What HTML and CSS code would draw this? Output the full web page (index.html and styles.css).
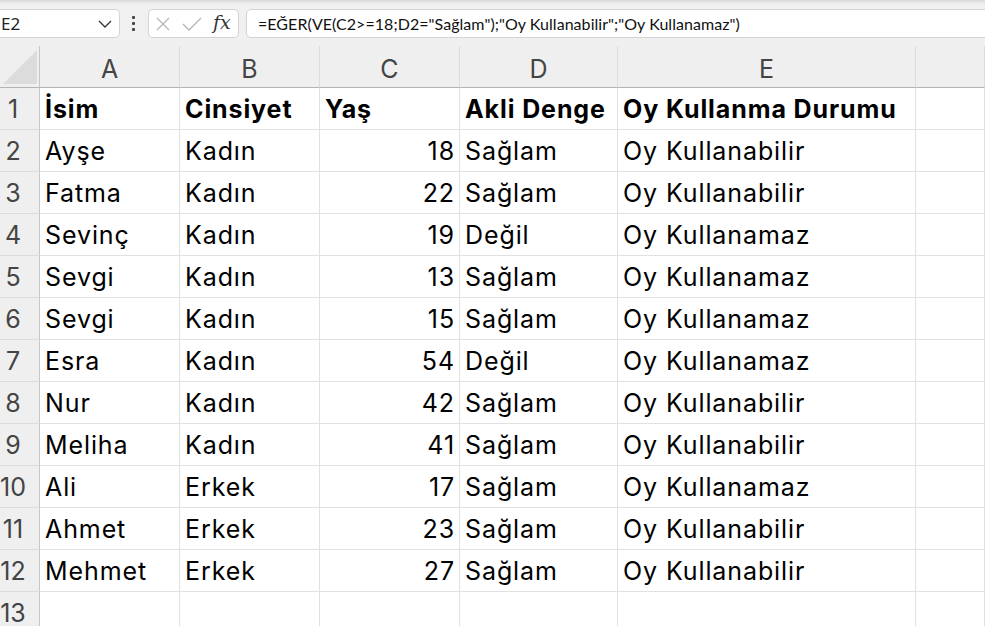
FILE: index.html
```html
<!DOCTYPE html>
<html lang="tr">
<head>
<meta charset="utf-8">
<link rel="stylesheet" href="styles.css">
</head>
<body>
<div class="app">
  <div class="toolbar">
    <div class="namebox">
      <span class="name">E2</span>
      <svg class="chev" width="14" height="8" viewBox="0 0 14 8"><path d="M1 1 L7 7 L13 1" fill="none" stroke="#333" stroke-width="1.3"/></svg>
    </div>
    <div class="dots"><i></i><i></i><i></i></div>
    <div class="fxbox">
      <svg class="ico" width="16" height="16" viewBox="0 0 16 16"><path d="M2 2 L14 14 M14 2 L2 14" stroke="#b5b5b5" stroke-width="1.3" fill="none"/></svg>
      <svg class="ico" width="20" height="16" viewBox="0 0 20 16"><path d="M1 8 L7 14 L19 2" stroke="#b5b5b5" stroke-width="1.3" fill="none"/></svg>
      <span class="fx">fx</span>
    </div>
    <div class="formula">=EĞER(VE(C2&gt;=18;D2="Sağlam");"Oy Kullanabilir";"Oy Kullanamaz")</div>
  </div>
  <div class="sheet">
    <div class="corner"><svg width="34" height="34" viewBox="0 0 34 34"><path d="M34 0 L34 34 L0 34 Z" fill="#dcdcdc"/></svg></div>
    <div class="colh">A</div><div class="colh">B</div><div class="colh">C</div><div class="colh">D</div><div class="colh">E</div><div class="colh"></div>

    <div class="rowh"><span>1</span></div><div class="c b">İsim</div><div class="c b">Cinsiyet</div><div class="c b">Yaş</div><div class="c b">Akli Denge</div><div class="c b">Oy Kullanma Durumu</div><div class="c"></div>
    <div class="rowh"><span>2</span></div><div class="c">Ayşe</div><div class="c">Kadın</div><div class="c n">18</div><div class="c">Sağlam</div><div class="c">Oy Kullanabilir</div><div class="c"></div>
    <div class="rowh"><span>3</span></div><div class="c">Fatma</div><div class="c">Kadın</div><div class="c n">22</div><div class="c">Sağlam</div><div class="c">Oy Kullanabilir</div><div class="c"></div>
    <div class="rowh"><span>4</span></div><div class="c">Sevinç</div><div class="c">Kadın</div><div class="c n">19</div><div class="c">Değil</div><div class="c">Oy Kullanamaz</div><div class="c"></div>
    <div class="rowh"><span>5</span></div><div class="c">Sevgi</div><div class="c">Kadın</div><div class="c n">13</div><div class="c">Sağlam</div><div class="c">Oy Kullanamaz</div><div class="c"></div>
    <div class="rowh"><span>6</span></div><div class="c">Sevgi</div><div class="c">Kadın</div><div class="c n">15</div><div class="c">Sağlam</div><div class="c">Oy Kullanamaz</div><div class="c"></div>
    <div class="rowh"><span>7</span></div><div class="c">Esra</div><div class="c">Kadın</div><div class="c n">54</div><div class="c">Değil</div><div class="c">Oy Kullanamaz</div><div class="c"></div>
    <div class="rowh"><span>8</span></div><div class="c">Nur</div><div class="c">Kadın</div><div class="c n">42</div><div class="c">Sağlam</div><div class="c">Oy Kullanabilir</div><div class="c"></div>
    <div class="rowh"><span>9</span></div><div class="c">Meliha</div><div class="c">Kadın</div><div class="c n">41</div><div class="c">Sağlam</div><div class="c">Oy Kullanabilir</div><div class="c"></div>
    <div class="rowh"><span>10</span></div><div class="c">Ali</div><div class="c">Erkek</div><div class="c n">17</div><div class="c">Sağlam</div><div class="c">Oy Kullanamaz</div><div class="c"></div>
    <div class="rowh"><span>11</span></div><div class="c">Ahmet</div><div class="c">Erkek</div><div class="c n">23</div><div class="c">Sağlam</div><div class="c">Oy Kullanabilir</div><div class="c"></div>
    <div class="rowh"><span>12</span></div><div class="c">Mehmet</div><div class="c">Erkek</div><div class="c n">27</div><div class="c">Sağlam</div><div class="c">Oy Kullanabilir</div><div class="c"></div>
    <div class="rowh"><span>13</span></div><div class="c"></div><div class="c"></div><div class="c"></div><div class="c"></div><div class="c"></div><div class="c"></div>
  </div>
</div>
</body>
</html>
```
FILE: styles.css
```css
html, body {
  margin: 0;
  padding: 0;
  width: 985px;
  height: 626px;
  overflow: hidden;
  background: #ffffff;
}
.app {
  width: 985px;
  height: 626px;
  overflow: hidden;
}
.toolbar {
  height: 46px;
  box-sizing: border-box;
  padding-top: 9px;
  display: flex;
  align-items: flex-start;
  background: linear-gradient(#d8d8d8 0, #ebebeb 3px, #f0f0f0 5px, #f0f0f0 100%);
  font-family: "Noto Sans", sans-serif;
}
.namebox {
  margin-left: -8px;
  width: 128px;
  height: 29px;
  box-sizing: border-box;
  background: #fff;
  border: 1px solid #d4d4d4;
  border-radius: 5px;
  display: flex;
  align-items: center;
  justify-content: space-between;
  padding: 0 7px 0 8px;
}
.name {
  font-size: 17px;
  color: #222;
  line-height: 1;
}
.chev {
  display: block;
}
.dots {
  width: 4px;
  margin: 7px 12px 0 12px;
  display: flex;
  flex-direction: column;
  gap: 3px;
}
.dots i {
  display: block;
  width: 3px;
  height: 3px;
  border-radius: 1px;
  background: #444;
}
.fxbox {
  width: 91px;
  height: 29px;
  box-sizing: border-box;
  background: #fff;
  border: 1px solid #d4d4d4;
  border-radius: 5px;
  display: flex;
  align-items: center;
  padding: 0 6px 0 6px;
  gap: 11px;
}
.ico {
  display: block;
}
.fx {
  font-family: "DejaVu Serif", "Liberation Serif", serif;
  font-style: italic;
  font-size: 19px;
  color: #333;
  line-height: 1;
  padding-bottom: 2px;
}
.formula {
  flex: 1;
  margin-left: 7px;
  margin-right: -10px;
  height: 29px;
  box-sizing: border-box;
  background: #fff;
  border: 1px solid #d4d4d4;
  border-radius: 5px;
  padding: 0 0 0 11px;
  display: flex;
  align-items: center;
  font-family: "Lato", sans-serif;
  font-size: 16px;
  letter-spacing: 0.05px;
  color: #111;
  white-space: nowrap;
}
.sheet {
  display: grid;
  grid-template-columns: 40px 140px 140px 140px 158px 298px 69px;
  grid-auto-rows: 42px;
  font-family: "Inter", sans-serif;
}
.corner {
  background: #efefef;
  border-right: 1px solid #c6c6c6;
  border-bottom: 1px solid #b4b4b4;
  box-sizing: border-box;
  display: flex;
  align-items: flex-end;
  justify-content: flex-start;
  padding: 0 0 3px 3px;
}
.corner svg {
  display: block;
}
.colh {
  background: #efefef;
  border-right: 1px solid #dcdcdc;
  border-bottom: 1px solid #b4b4b4;
  box-sizing: border-box;
  display: flex;
  align-items: flex-end;
  justify-content: center;
  font-size: 25px;
  line-height: 30px;
  padding-bottom: 3px;
  color: #444;
}
.rowh {
  background: #efefef;
  border-right: 1px solid #c6c6c6;
  border-bottom: 1px solid #dcdcdc;
  box-sizing: border-box;
  display: flex;
  align-items: flex-end;
  font-size: 25px;
  line-height: 30px;
  padding-bottom: 5px;
  color: #444;
}
.rowh span {
  width: 26px;
  text-align: center;
}
.c {
  border-right: 1px solid #e1e1e1;
  border-bottom: 1px solid #e1e1e1;
  box-sizing: border-box;
  display: flex;
  align-items: flex-end;
  padding: 0 5px 5px 5px;
  font-size: 25px;
  line-height: 30px;
  letter-spacing: 0.9px;
  color: #000;
  white-space: nowrap;
}
.c.n {
  justify-content: flex-end;
  padding-right: 4px;
}
.c.b {
  font-weight: 700;
}
```
